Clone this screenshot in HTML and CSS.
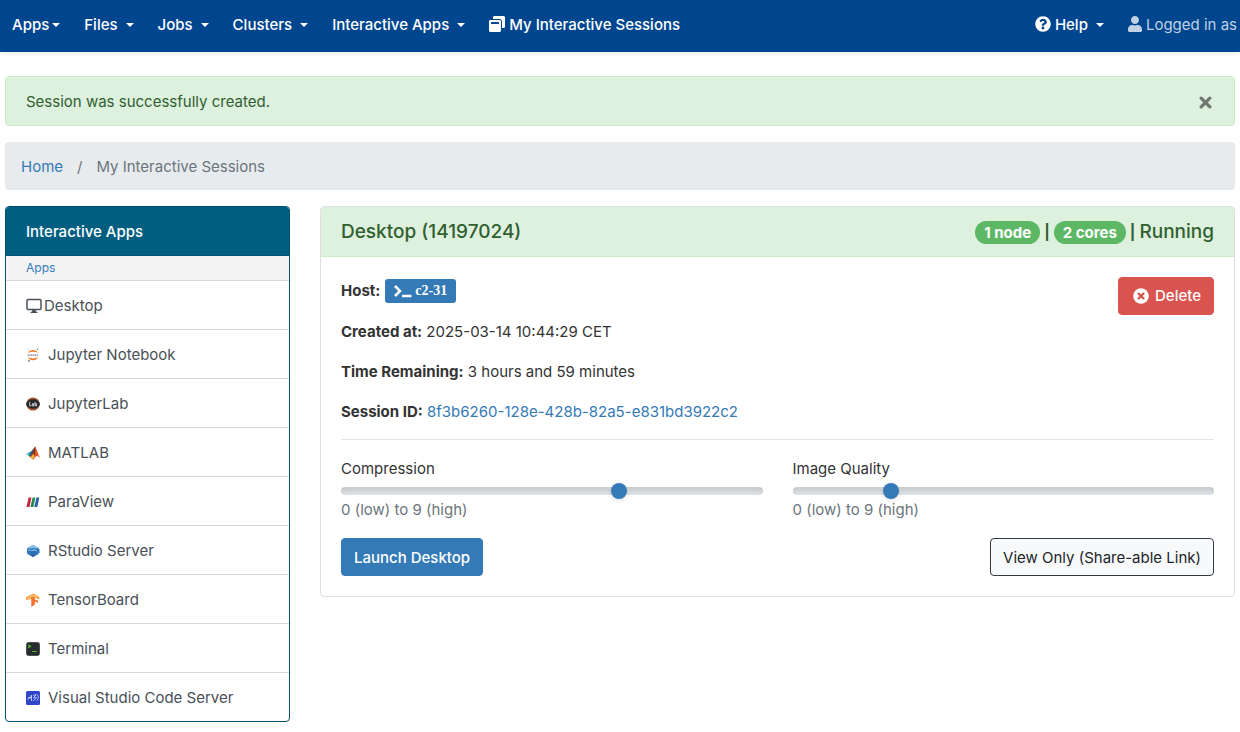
FILE: index.html
```html
<!DOCTYPE html>
<html lang="en">
<head>
<meta charset="utf-8">
<meta name="viewport" content="width=device-width, initial-scale=1">
<title>My Interactive Sessions</title>
<link rel="stylesheet" href="styles.css">
</head>
<body>
<nav class="navbar" aria-label="Main">
  <div class="nav-group">
    <button class="nav-item nav-item-tight" type="button">Apps<span class="caret"></span></button>
    <button class="nav-item" type="button">Files<span class="caret"></span></button>
    <button class="nav-item" type="button">Jobs<span class="caret"></span></button>
    <button class="nav-item" type="button">Clusters<span class="caret"></span></button>
    <button class="nav-item" type="button">Interactive Apps<span class="caret"></span></button>
    <a class="nav-item nav-item-icon" href="#">
      <svg class="icon" viewBox="0 0 512 512" aria-hidden="true"><path fill="currentColor" d="M512 48v288c0 26.500-21.500 48-48 48h-48V176c0-44.100-35.900-80-80-80H128V48c0-26.500 21.500-48 48-48h288c26.500 0 48 21.500 48 48zM384 176v288c0 26.500-21.500 48-48 48H48c-26.500 0-48-21.500-48-48V176c0-26.500 21.500-48 48-48h288c26.500 0 48 21.500 48 48zm-68 28c0-6.600-5.400-12-12-12H76c-6.600 0-12 5.400-12 12v52h252v-52z"/></svg>
      My Interactive Sessions</a>
  </div>
  <div class="nav-group">
    <button class="nav-item nav-item-icon" type="button">
      <svg class="icon" viewBox="0 0 512 512" aria-hidden="true"><path fill="currentColor" d="M504 256c0 137-111 248-248 248S8 393 8 256C8 119.100 119 8 256 8s248 111.100 248 248zM262.700 90c-54.500 0-89.300 23-116.500 63.800-3.500 5.300-2.400 12.400 2.700 16.300l34.700 26.300c5.200 3.900 12.600 3 16.700-2.100 17.900-22.700 30.100-35.800 57.300-35.800 20.400 0 45.700 13.100 45.700 33 0 15-12.400 22.700-32.500 34C247.100 238.500 216 254.900 216 296v4c0 6.600 5.400 12 12 12h56c6.600 0 12-5.400 12-12v-1.300c0-28.500 83.200-29.600 83.200-106.700 0-58-60.200-102-116.500-102zM256 338c-25.400 0-46 20.600-46 46 0 25.400 20.600 46 46 46s46-20.600 46-46c0-25.400-20.600-46-46-46z"/></svg>
      Help<span class="caret"></span></button>
    <span class="nav-item nav-item-icon nav-user">
      <svg class="icon icon-user" viewBox="0 0 448 512" aria-hidden="true"><path fill="currentColor" d="M224 256c70.700 0 128-57.300 128-128S294.700 0 224 0 96 57.300 96 128s57.300 128 128 128zm89.600 32h-16.700c-22.200 10.200-46.900 16-72.900 16s-50.600-5.800-72.900-16h-16.700C60.200 288 0 348.200 0 422.400V464c0 26.500 21.500 48 48 48h352c26.500 0 48-21.500 48-48v-41.600c0-74.200-60.200-134.400-134.400-134.400z"/></svg>
      Logged in as</span>
  </div>
</nav>

<main class="page">
  <div class="alert" role="alert">
    <span>Session was successfully created.</span>
    <button class="alert-close" type="button" aria-label="Close">
      <svg class="icon-close" viewBox="0 0 12 12" aria-hidden="true"><path d="M2 2l8 8M10 2l-8 8" stroke="currentColor" stroke-width="3" stroke-linecap="round"/></svg>
    </button>
  </div>

  <nav class="breadcrumb" aria-label="Breadcrumb">
    <a class="link" href="#">Home</a><span>/</span><span>My Interactive Sessions</span>
  </nav>

  <div class="columns">
    <aside class="apps">
      <h2 class="apps-title">Interactive Apps</h2>
      <p class="apps-group">Apps</p>
      <a class="app app-desktop" href="#">
        <svg class="icon" viewBox="0 0 16 16" aria-hidden="true"><rect x="1" y="1.500" width="14" height="10" rx="1" fill="none" stroke="currentColor" stroke-width="1.500"/><path d="M6.500 11.500h3l.5 2.200h1.500V15h-7v-1.300H6z" fill="currentColor"/></svg>
        Desktop</a>
      <a class="app" href="#">
        <svg class="app-icon" viewBox="0 0 14 14" aria-hidden="true"><path d="M2 5.200C3.500.8 10.500.8 12 5.200 9.500 3.300 4.500 3.300 2 5.200zM2 9c1.500 4.400 8.500 4.400 10 0-2.500 1.900-7.500 1.900-10 0z" fill="#f37626"/><path d="M1.500 7.200h11" stroke="#8b7d76" stroke-width="1.200" stroke-dasharray="1.300 .5"/><circle cx="11.500" cy="1.200" r=".8" fill="#777"/><circle cx="2.200" cy="1.800" r=".5" fill="#888"/><circle cx="3" cy="12.800" r=".9" fill="#666"/></svg>
        Jupyter Notebook</a>
      <a class="app" href="#">
        <svg class="app-icon" viewBox="0 0 14 14" aria-hidden="true"><circle cx="7" cy="7" r="6.600" fill="#a6532c"/><ellipse cx="7" cy="7" rx="6.900" ry="4.700" fill="#26282b"/><path d="M3.700 4.800v4h1.500M6.200 6.600h1.500v2.300H6.100V7.700h1.500M9 4.800v4h1.600V6.700H9" fill="none" stroke="#ddd" stroke-width=".9"/></svg>
        JupyterLab</a>
      <a class="app" href="#">
        <svg class="app-icon" viewBox="0 0 14 14" aria-hidden="true"><path d="M0 8l4-2 2.500 2.300L4 11z" fill="#4dbeca"/><path d="M4 6c2-.5 3-4 5-5L6.500 9 4 11l-1-2z" fill="#28647b"/><path d="M9 .5C7.500 3 6.500 8 4 11c1.500 0 2 2.500 3.200 2.500C9 13 9.300 10 10.800 10c1.200 0 2 .7 3.200 2C12.200 8.500 10.500 2 9 .5z" fill="#dd5727"/><path d="M9 .5c.7 4-.6 10-1.800 13-1.200 0-1.700-2.500-3.200-2.500C7 7.500 7.700 3 9 .5z" fill="#7b2d20"/><path d="M4 11c2-1 2.700-2.500 3.300-3.500L8.600 11l-1.400 2.500C6 13.500 5.500 11 4 11z" fill="#f4b33d"/></svg>
        MATLAB</a>
      <a class="app" href="#">
        <svg class="app-icon" viewBox="0 0 14 14" aria-hidden="true"><path d="M2.600 2.500h2.800L3.500 12H.5z" fill="#c9233f"/><path d="M6.600 2.500h2.800L7.400 12H4.400z" fill="#238b54"/><path d="M10.500 2.500h2.800L11.300 12H8.300z" fill="#2461a8"/></svg>
        ParaView</a>
      <a class="app" href="#">
        <svg class="app-icon" viewBox="0 0 14 14" aria-hidden="true"><path d="M7 1l5.500 2.800v6.400L7 13l-5.500-2.800V3.800z" fill="#397ec2"/><path d="M7 1l5.500 2.800L7 6.300 1.500 3.800z" fill="#8bc2ed"/><path d="M1 5l6-1 6.500 1v4L7 10 1 9z" fill="#2c73b9"/><path d="M2 6.500c2-1.500 3 .5 5-.3 1.500-.7 3 0 4 .8" fill="none" stroke="#a5d7f4"/><path d="M4 10.500l3 2.500 3-2.500z" fill="#285493"/></svg>
        RStudio Server</a>
      <a class="app" href="#">
        <svg class="app-icon" viewBox="0 0 14 14" aria-hidden="true"><path d="M0 4.200L7.300.5l6 3.200v3L8.800 4.500 5.500 6 0 7z" fill="#f8a043"/><path d="M5.300 4.200l3.500-1.500v3.500l3.200 1.600v2.100L8.800 8.500v3.300l-3.500 1.900z" fill="#f2712f"/><path d="M2 5l5-2.500 4 2" fill="none" stroke="#fbbd72" stroke-width="1.500"/></svg>
        TensorBoard</a>
      <a class="app" href="#">
        <svg class="app-icon" viewBox="0 0 14 14" aria-hidden="true"><rect x=".5" y=".5" width="13" height="13" rx="2" fill="#272d2e" stroke="#4a4f50"/><path d="M2 3l2.500 1.300L2 5.600M6 9.500h4.500" fill="none" stroke="#57ba35" stroke-width="1.200"/></svg>
        Terminal</a>
      <a class="app" href="#">
        <svg class="app-icon" viewBox="0 0 14 14" aria-hidden="true"><rect width="14" height="14" rx="1.500" fill="#2f45cc"/><path d="M1.500 8c2 0 3-1 4-4v6M2 6.500h4M7.200 4.500l3-1-2.500 3.200h2.800L7.200 10M11 3.500c2 1.500 1.700 4.500-.5 6.500" fill="none" stroke="#c5d1ff" stroke-width=".9"/></svg>
        Visual Studio Code Server</a>
    </aside>

    <section class="card">
      <header class="card-header">
        <h1 class="card-title">Desktop (14197024)</h1>
        <div class="card-status"><span class="badge">1 node</span><span class="pipe">|</span><span class="badge">2 cores</span><span class="pipe">|</span><span>Running</span></div>
      </header>
      <div class="card-body">
        <div class="session">
          <div class="facts">
            <div class="host"><strong>Host:</strong>
              <a class="host-btn" href="#"><svg class="icon-prompt" viewBox="0 0 20 14" aria-hidden="true"><path d="M2 2l5 5-5 5" fill="none" stroke="currentColor" stroke-width="2.500"/><path d="M9 12h9.500" stroke="currentColor" stroke-width="2.500"/></svg>c2-31</a>
            </div>
            <p class="fact"><strong>Created at:</strong> 2025-03-14 10:44:29 CET</p>
            <p class="fact"><strong>Time Remaining:</strong> 3 hours and 59 minutes</p>
            <p class="fact"><strong>Session ID:</strong> <a class="link" href="#">8f3b6260-128e-428b-82a5-e831bd3922c2</a></p>
          </div>
          <button class="btn btn-danger" type="button">
            <svg class="icon" viewBox="0 0 16 16" aria-hidden="true"><circle cx="8" cy="8" r="7.800" fill="#fff"/><path d="M5 5l6 6M11 5l-6 6" stroke="#d9534f" stroke-width="2.400"/></svg>
            Delete</button>
        </div>
        <hr class="rule">
        <form class="settings">
          <div class="field">
            <label for="compression">Compression</label>
            <input class="range" id="compression" type="range" min="0" max="9" value="6">
            <small class="help">0 (low) to 9 (high)</small>
          </div>
          <div class="field">
            <label for="quality">Image Quality</label>
            <input class="range" id="quality" type="range" min="0" max="9" value="2">
            <small class="help">0 (low) to 9 (high)</small>
          </div>
        </form>
        <div class="actions">
          <button class="btn btn-primary" type="button">Launch Desktop</button>
          <a class="btn btn-light" href="#">View Only (Share-able Link)</a>
        </div>
      </div>
    </section>
  </div>
</main>
</body>
</html>
```
FILE: styles.css
```css
* { box-sizing: border-box; }

body {
  margin: 0;
  background: #fff;
  color: #333;
  font-family: Inter, "Liberation Sans", sans-serif;
  font-size: 15px;
  line-height: 24px;
}

button, input { font: inherit; }
h1, h2, p { margin: 0; }
strong { font-weight: 700; }
.link { color: #337ab7; text-decoration: none; }
.icon { width: 16px; height: 16px; flex: none; }

/* Top bar */
.navbar {
  display: flex;
  justify-content: space-between;
  padding: 13px 3px 15px 12px;
  background: #00468f;
  box-shadow: 0 2px 4px rgba(0, 0, 0, .08);
  font-weight: 500;
  white-space: nowrap;
}
.nav-group { display: flex; gap: 24px; }
.nav-item {
  display: flex;
  align-items: center;
  gap: 8px;
  padding: 0;
  border: 0;
  background: none;
  color: #fff;
  text-decoration: none;
}
.nav-item .icon { margin-bottom: 2px; }
.nav-item-tight { gap: 3px; }
.nav-item-icon { gap: 4px; }
.nav-item-icon .caret { margin-left: 4px; }
.nav-user { color: #bfd1e3; font-weight: 400; }
.icon-user { width: 14px; }
.caret {
  border: 4px solid transparent;
  border-top-color: currentColor;
  border-bottom: 0;
}

.page { padding: 24px 5px 10px; }

/* Flash message */
.alert {
  display: flex;
  align-items: center;
  justify-content: space-between;
  margin-bottom: 16px;
  padding: 13px 20px 11px;
  border: 1px solid #cde9ce;
  border-radius: 4px;
  background: #def0de;
  color: #306030;
}
.alert-close {
  display: flex;
  padding: 2px;
  border: 0;
  background: none;
  color: #6f786f;
}
.icon-close { width: 13px; height: 13px; }

.breadcrumb {
  display: flex;
  gap: 14px;
  margin-bottom: 16px;
  padding: 13px 16px 11px;
  border-radius: 4px;
  background: #e8ebee;
  color: #6c757d;
}

.columns {
  display: grid;
  grid-template-columns: repeat(12, minmax(0, 1fr));
  gap: 30px;
  align-items: start;
}

/* Sidebar */
.apps {
  grid-column: span 3;
  overflow: hidden;
  border: 1px solid #005072;
  border-radius: 4px;
}
.apps-title {
  padding: 13px 20px 11px;
  border-bottom: 1px solid #005072;
  background: #005e80;
  color: #fff;
  font-size: 15px;
  font-weight: 500;
}
.apps-group {
  padding: 0 20px;
  background: #f4f4f4;
  color: #337ab7;
  font-size: 12px;
}
.app {
  display: flex;
  align-items: center;
  gap: 8px;
  padding: 13px 20px 11px;
  border-top: 1px solid #d9d9d9;
  color: #495057;
  text-decoration: none;
}
.app-desktop { gap: 2px; }
.app-icon { width: 14px; height: 14px; flex: none; }

/* Session card */
.card {
  grid-column: span 9;
  border: 1px solid #dfdfdf;
  border-radius: 4px;
}
.card-header {
  display: flex;
  justify-content: space-between;
  padding: 13px 20px 12px;
  border-bottom: 1px solid #cde9ce;
  background: #def0de;
  color: #306030;
}
.card-title { font-size: 19px; font-weight: 500; }
.card-status {
  display: flex;
  align-items: center;
  gap: 4px;
  font-size: 19px;
  font-weight: 500;
}
.pipe { font-size: 15px; font-weight: 700; }
.badge {
  padding: 0 9px;
  border-radius: 12px;
  background: #5cb865;
  color: #fff;
  font-size: 15px;
  font-weight: 700;
  line-height: 23px;
}
.card-body { padding: 20px; }
.session { display: flex; justify-content: space-between; align-items: flex-start; }
.facts { display: grid; gap: 16px; }
.host { display: flex; align-items: center; gap: 5px; height: 27px; }
.host-btn {
  display: flex;
  align-items: center;
  gap: 2px;
  padding: 0 9px 0 8px;
  border-radius: 3px;
  background: #337ab7;
  color: #fff;
  font-family: "Liberation Serif", serif;
  font-size: 14px;
  font-weight: 700;
  text-decoration: none;
}
.icon-prompt { width: 20px; height: 14px; }
.rule { margin: 15px 0 17px; border: 0; border-top: 1px solid #e3e3e3; }

.settings { display: grid; grid-template-columns: 1fr 1fr; gap: 30px; }
.field { display: flex; flex-direction: column; }
.range {
  width: 100%;
  height: 20px;
  margin: 0;
  background: none;
  appearance: none;
}
.range::-webkit-slider-runnable-track {
  height: 8px;
  border-radius: 8px;
  background: #dee2e6;
  box-shadow: inset 0 4px 4px rgba(0, 0, 0, .1);
}
.range::-webkit-slider-thumb {
  width: 16px;
  height: 16px;
  margin-top: -4px;
  border-radius: 50%;
  background: #337ab7;
  box-shadow: 0 2px 4px rgba(0, 0, 0, .1);
  appearance: none;
}
.help { color: #6c757d; font-size: 15px; line-height: 18px; }

.actions { display: flex; justify-content: space-between; margin-top: 19px; }
.btn {
  display: flex;
  align-items: center;
  gap: 6px;
  padding: 7px 12px 5px;
  border: 1px solid;
  border-radius: 4px;
  text-decoration: none;
  white-space: nowrap;
}
.btn-primary { border-color: #337ab7; background: #337ab7; color: #fff; font-weight: 500; }
.btn-danger {
  padding: 6px 12px 6px 14px;
  border-color: #d9534f;
  background: #d9534f;
  color: #fff;
  font-weight: 500;
}
.btn-light { border-color: #343a40; background: #f8f9fa; color: #212529; }
```
